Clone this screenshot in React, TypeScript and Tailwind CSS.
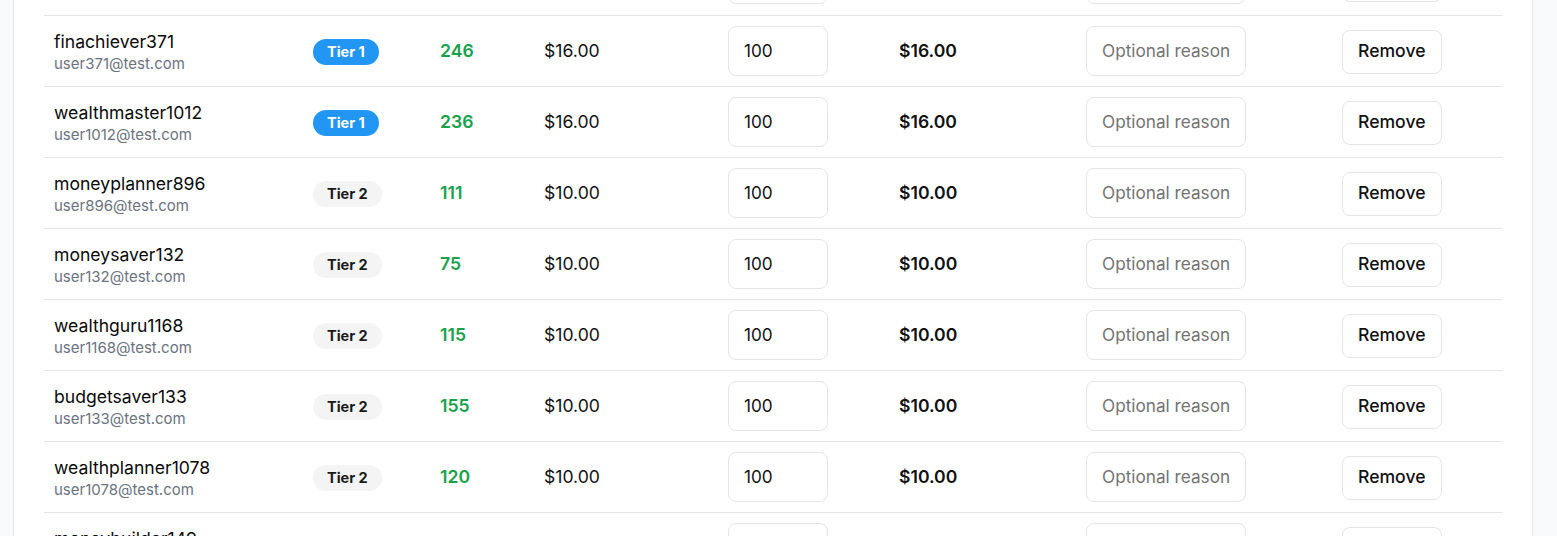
const rows = [
  { name: "savingspro245", email: "user245@test.com", tier: 2, points: 98, price: "$10.00" },
  { name: "finachiever371", email: "user371@test.com", tier: 1, points: 246, price: "$16.00" },
  { name: "wealthmaster1012", email: "user1012@test.com", tier: 1, points: 236, price: "$16.00" },
  { name: "moneyplanner896", email: "user896@test.com", tier: 2, points: 111, price: "$10.00" },
  { name: "moneysaver132", email: "user132@test.com", tier: 2, points: 75, price: "$10.00" },
  { name: "wealthguru1168", email: "user1168@test.com", tier: 2, points: 115, price: "$10.00" },
  { name: "budgetsaver133", email: "user133@test.com", tier: 2, points: 155, price: "$10.00" },
  { name: "wealthplanner1078", email: "user1078@test.com", tier: 2, points: 120, price: "$10.00" },
  { name: "moneybuilder149", email: "user149@test.com", tier: 2, points: 132, price: "$10.00" },
];

function TierBadge({ tier }: { tier: number }) {
  if (tier === 1) {
    return (
      <span className="inline-flex h-[26px] items-center rounded-full bg-[#2196f3] px-[14px] text-[14.5px] font-bold text-white">
        Tier 1
      </span>
    );
  }
  return (
    <span className="inline-flex h-[26px] items-center rounded-full bg-[#f4f4f4] px-[14px] text-[14.5px] font-bold text-[#1a1a1a]">
      Tier {tier}
    </span>
  );
}

export default function App() {
  return (
    <div className="flex h-[536px] overflow-hidden bg-[#f8f9fb] pl-[13px] font-['Inter',sans-serif] text-[17.6px] text-[#111]">
      <div className="w-[1520px] shrink-0 border-x border-[#e8e8ea] bg-white px-[30px]">
        <table className="-mt-[56px] w-[1458px] table-fixed border-collapse">
          <colgroup>
            <col className="w-[259px]" />
            <col className="w-[127px]" />
            <col className="w-[104px]" />
            <col className="w-[184px]" />
            <col className="w-[171px]" />
            <col className="w-[187px]" />
            <col className="w-[256px]" />
            <col className="w-[170px]" />
          </colgroup>
          <tbody>
            {rows.map((r) => (
              <tr key={r.email} className="h-[71px] border-b border-[#e5e5e5]">
                <td className="px-[10px] pb-[10px] pt-[13px] align-middle">
                  <div className="leading-[22px] text-[#0a0a0a]">{r.name}</div>
                  <div className="text-[15px] leading-[21px] text-[#6b7280]">{r.email}</div>
                </td>
                <td className="px-[10px] pb-[9px] pt-[11px] align-middle">
                  <TierBadge tier={r.tier} />
                </td>
                <td className="px-[10px] pb-[9px] pt-[11px] align-middle font-semibold text-[#16a34a]">
                  {r.points}
                </td>
                <td className="px-[10px] pb-[9px] pt-[11px] align-middle">{r.price}</td>
                <td className="p-[10px] align-middle">
                  <input
                    readOnly
                    value="100"
                    className="h-[50px] w-[100px] rounded-lg border border-[#e5e5e5] px-[15px] text-[17.2px] text-[#111] outline-none"
                  />
                </td>
                <td className="px-[10px] pb-[9px] pt-[11px] align-middle font-semibold">{r.price}</td>
                <td className="p-[10px] align-middle">
                  <input
                    readOnly
                    placeholder="Optional reason"
                    className="h-[50px] w-[160px] rounded-lg border border-[#e5e5e5] px-[15px] text-[17.2px] outline-none placeholder:text-[#737373]"
                  />
                </td>
                <td className="px-[10px] pb-[9px] pt-[11px] align-middle">
                  <button className="h-[44px] rounded-lg border border-[#e5e5e5] bg-white px-[15px] text-[17.6px] font-medium text-[#111]">
                    Remove
                  </button>
                </td>
              </tr>
            ))}
          </tbody>
        </table>
      </div>
    </div>
  );
}
